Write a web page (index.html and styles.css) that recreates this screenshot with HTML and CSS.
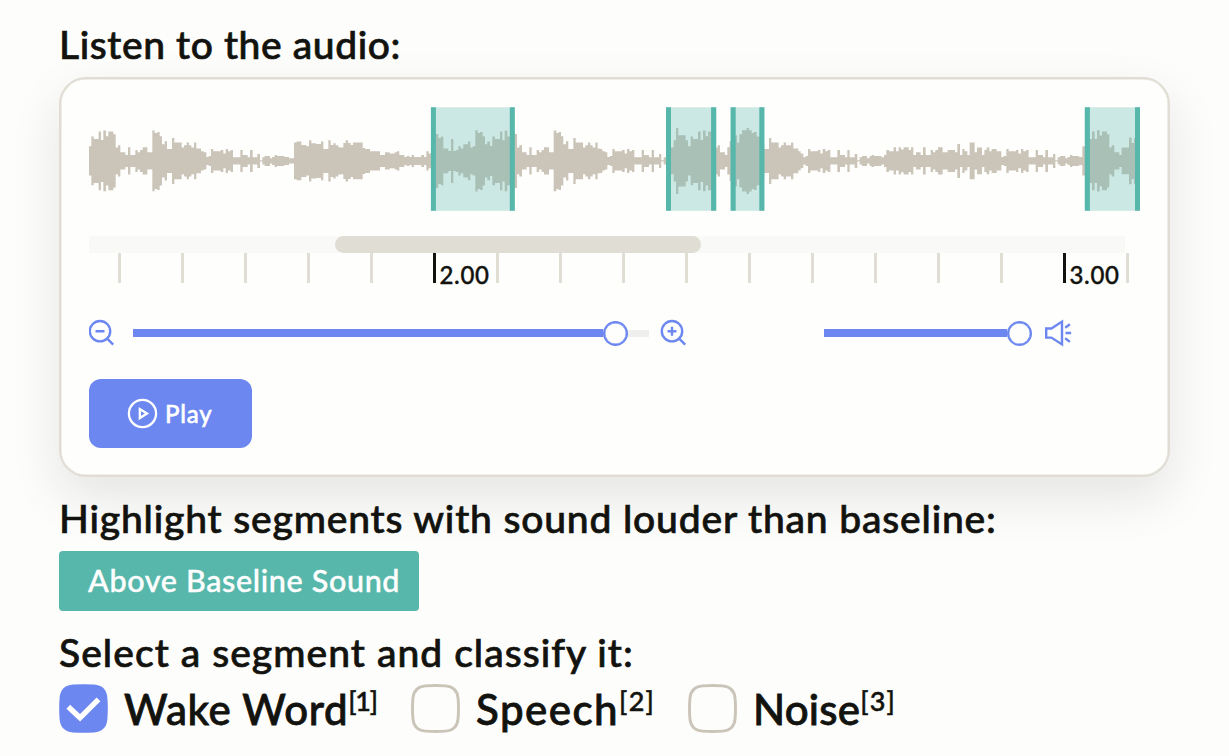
FILE: index.html
```html
<!DOCTYPE html>
<html lang="en">
<head>
<meta charset="utf-8">
<title>Audio segments</title>
<link rel="stylesheet" href="styles.css">
</head>
<body>
<main class="page">
  <h2 class="heading heading-listen">Listen to the audio:</h2>
  <section class="card">
    <svg class="wave" width="1052" height="104" viewBox="89 107 1052 104">
      <defs>
        <g id="half">
          <path transform="translate(240)" d="M27 0V-44H34V-73H41V-66H56V-88H63V-63H70V-91H78V-74H85V-88H100V-80H107V-40H114V-47H121V-26H136V-18H144V-41H151V-18H166V-33H173V-26H180V-33H188V-41H202V-26H217V-91H224V-84H232V-87H239V-74H246V-50H254V-59H261V-36H276V-69H283V-55H305V-40H312V-47H320V-55H327V-47H334V-40H342V-55H349V-37H363V-29H371V-26H379V-12H386V-15H393V-36H400V-29H422V-33H430V-22H437V-36H444V-29H452V-33H459V-11H481V-33H488V-18H503V-11H510V-33H518V-11H532V-21H540V-2H547V-11H554V-15H570V-8H576V-12H584V-18H591V-15H613V-12H627V-8H642V-55H650V-58H664V-48H679V-44H687V-62H694V-53H708V-51H723V-58H730V-36H745V-62H752V-48H760V-53H767V-47H775V-41H781V0Z"/>
          <path transform="translate(1020)" d="M0 0V-40H10V-54H17V-62H24V-54H32V-48H39V-55H68V-39H75V-36H90V-29H120V-18H135V-26H149V-22H164V-26H171V-29H178V-18H193V-12H200V-15H208V-12H215V-18H222V-12H244V-18H252V-12H259V-29H266V-22H273V-50H280V-83H288V-81H295V-69H303V-73H310V-37H325V-30H333V-66H340V-30H347V-33H355V-44H362V-37H370V-50H384V-58H391V-40H398V-44H406V-92H413V-84H420V-87H428V-74H435V-50H442V-58H450V-45H457V-73H465V-66H480V-88H487V-62H494V-91H502V-73H510V-88H524V-81H531V-40H538V-47H546V-26H560V-18H568V-41H575V-18H590V-33H597V-26H605V-33H612V-41H627V-26H641V-91H649V-84H656V-87H663V-74H670V-50H678V-59H685V-36H700V-69H707V-55H729V-40H736V-47H744V-55H751V-47H758V-40H766V-55H773V-37H781V0Z"/>
          <path transform="translate(1800)" d="M0 0V-36H7V-29H15V-26H22V-12H30V-15H37V-36H44V-29H66V-33H74V-22H81V-36H88V-29H96V-33H103V-11H125V-33H132V-18H147V-11H155V-33H162V-11H177V-21H184V-2H191V-11H198V-15H213V-40H221V-62H228V-99H235V-77H257V-62H264V-44H272V-73H279V-66H294V-88H302V-63H309V-91H317V-74H324V-88H339V-80H346V-40H353V-47H360V-26H375V-18H382V-41H389V-60H400V-77H411V-55H418V-80H426V-92H440V-99H447V-92H455V-84H462V-87H470V-73H480V-50H493V-36H507V-69H514V-55H536V-40H543V-47H551V-55H558V-47H573V-55H580V-37H595V-29H602V-22H610V-11H617V-15H624V-36H631V-29H654V-33H661V-22H668V-36H676V-29H683V-33H691V-11H712V-33H720V-18H735V-11H742V-33H749V-11H764V-21H772V-2H779V-11H786V-15H801V-8H808V-12H811V0Z"/>
          <path transform="translate(2610)" d="M0 0V-15H5V-18H12V-15H34V-11H42V-18H49V-33H57V-29H71V-41H78V-29H86V-41H93V-34H101V-41H116V-33H123V-41H130V-18H138V-26H152V-18H159V-41H167V-18H182V-33H189V-26H196V-33H204V-41H218V-26H233V-33H255V-26H262V-51H270V-18H277V-36H284V-29H292V-18H299V-55H314V-26H321V-40H336V-18H343V-33H350V-40H358V-29H365V-36H380V-29H394V-12H401V-15H409V-36H416V-29H438V-33H445V-22H453V-36H460V-29H468V-33H476V-11H497V-33H504V-18H519V-11H526V-33H534V-11H549V-21H556V-2H563V-11H570V-15H586V-8H593V-12H600V-18H607V-15H627V-12H637V-44H645V-70H660V-66H666V-88H674V-66H681V-92H689V-76H696V-88H711V-80H718V-40H725V-47H733V-26H748V-18H755V-40H777V-70H785V-54H792V-69H810V0Z"/>
        </g>
      </defs>
      <g class="wave-shape" transform="translate(0 160.9) scale(.33333)">
        <use href="#half"/>
        <use href="#half" transform="scale(1 -1)"/>
      </g>
      <g class="region">
        <rect x="431" y="107.3" width="83.8" height="103.5"/>
        <rect x="666" y="107.3" width="50.6" height="103.5"/>
        <rect x="730.4" y="107.3" width="34.3" height="103.5"/>
        <rect x="1084.5" y="107.3" width="55.5" height="103.5"/>
      </g>
      <path class="handles" d="M433.4 107.3v103.5M512.3 107.3v103.5M668.5 107.3v103.5M713.6 107.3v103.5M733.2 107.3v103.5M761.8 107.3v103.5M1087.4 107.3v103.5M1137.5 107.3v103.5"/>
    </svg>
    <div class="scroll"><div class="scroll-thumb"></div></div>
    <div class="ruler">
      <i></i><i></i><i></i><i></i><i></i><i class="major">2.00</i><i></i><i></i><i></i><i></i><i></i><i></i><i></i><i></i><i></i><i class="major">3.00</i><i></i>
    </div>
    <div class="controls">
      <svg class="icon" width="28" height="28" viewBox="1 0 28 28"><circle cx="12" cy="12.2" r="10.2"/><path d="M7.5 12.2h9M19.2 19.6l6 6"/></svg>
      <div class="slider zoom"><div class="fill zoom-fill"></div><div class="knob"></div></div>
      <svg class="icon" width="28" height="28" viewBox="-1 0 28 28"><circle cx="12" cy="12.2" r="10.2"/><path d="M7.5 12.2h9M12 7.7v9M19.2 19.6l6 6"/></svg>
      <div class="slider volume"><div class="fill volume-fill"></div><div class="knob"></div></div>
      <svg class="icon speaker" width="28" height="28" viewBox="0 0 28 28"><path d="M2.2 9.5h5.2L18 2.6v22.8L7.4 18.6H2.2ZM21.2 8.8l4.7-3.6M21.5 14h5.6M21.2 19.3l4.7 3.6"/></svg>
    </div>
    <button class="play">
      <svg width="31" height="31" viewBox="0 0 31 31"><circle cx="15.5" cy="15.5" r="13.6"/><path d="M12.8 11.1v9l7.2-4.5Z"/></svg>
      <span>Play</span>
    </button>
  </section>
  <h2 class="heading heading-highlight">Highlight segments with sound louder than baseline:</h2>
  <div class="tag"><span>Above Baseline Sound</span></div>
  <h2 class="heading heading-select">Select a segment and classify it:</h2>
  <div class="choices">
    <label class="choice wake"><svg width="49" height="49" viewBox="0 0 49 49"><path class="on" d="M14 .6Q24.5-.2 35 .6Q47.5 1.5 48.4 14Q49.2 24.5 48.4 35Q47.5 47.5 35 48.4Q24.5 49.2 14 48.4Q1.5 47.5 .6 35Q-.2 24.5 .6 14Q1.5 1.5 14 .6Z"/><path class="check" d="M9.3 22.8 21 33.8 39.5 15.3"/></svg><span class="name">Wake Word</span><span class="key">[1]</span></label>
    <label class="choice speech"><svg width="49" height="49" viewBox="0 0 49 49"><path class="off" d="M14.5 1.9Q24.5 1.1 34.5 1.9Q46.2 2.8 47.1 14.5Q47.9 24.5 47.1 34.5Q46.2 46.2 34.5 47.1Q24.5 47.9 14.5 47.1Q2.8 46.2 1.9 34.5Q1.1 24.5 1.9 14.5Q2.8 2.8 14.5 1.9Z"/></svg><span class="name">Speech</span><span class="key">[2]</span></label>
    <label class="choice noise"><svg width="49" height="49" viewBox="0 0 49 49"><path class="off" d="M14.5 1.9Q24.5 1.1 34.5 1.9Q46.2 2.8 47.1 14.5Q47.9 24.5 47.1 34.5Q46.2 46.2 34.5 47.1Q24.5 47.9 14.5 47.1Q2.8 46.2 1.9 34.5Q1.1 24.5 1.9 14.5Q2.8 2.8 14.5 1.9Z"/></svg><span class="name">Noise</span><span class="key">[3]</span></label>
  </div>
</main>
</body>
</html>
```
FILE: styles.css
```css
* { box-sizing: border-box; }
body {
  margin: 0;
  width: 1229px;
  height: 756px;
  overflow: hidden;
  background: #fdfdfb;
  color: #12120e;
  font-family: Lato, "Open Sans", sans-serif;
  font-weight: 500;
}
.page { padding: 20px 59px 0; }
.heading {
  position: relative;
  z-index: 1;
  margin: 0;
  height: 52px;
  font-size: 39px;
  line-height: 49px;
  font-weight: 500;
  white-space: nowrap;
  -webkit-text-stroke: .7px;
}
.heading-listen { height: 57px; letter-spacing: .6px; }
.heading-highlight { margin-top: 17px; height: 57px; letter-spacing: .83px; }
.heading-select { margin-top: 17px; letter-spacing: 1.05px; }
.card {
  width: 1111px;
  height: 400px;
  padding: 28px 0 0 28px;
  border: 2px solid #e0ddd4;
  border-radius: 27px;
  background: #fefefc;
  box-shadow: inset 0 0 0 .5px #e0ddd4, 0 20px 50px rgba(30, 30, 25, .11);
}
.wave { display: block; }
.wave-shape { fill: #cbc4b9; }
.region { fill: #58b7ab; fill-opacity: .3; }
.handles { stroke: #58b7ab; stroke-width: 5; }
.scroll {
  width: 1036px;
  height: 17px;
  margin-top: 25px;
  padding-left: 246px;
  background: #f9f9f7;
}
.scroll-thumb { width: 366px; height: 17px; border-radius: 8.5px; background: #e0ddd4; }
.ruler { display: flex; height: 30px; padding-left: 28.5px; }
.ruler i {
  flex: 0 0 63px;
  height: 30px;
  padding-left: 7px;
  background: linear-gradient(#e0ddd4, #e0ddd4) left / 3px 30px no-repeat;
  font-size: 24px;
  font-style: normal;
  line-height: 43px;
  letter-spacing: .7px;
}
.ruler .major { background-image: linear-gradient(#12120e, #12120e); -webkit-text-stroke: .4px; }
.ruler i:last-child { flex-basis: 3px; padding: 0; }
.controls { display: flex; align-items: center; height: 28px; margin-top: 36px; }
.icon { flex: none; fill: none; stroke: #6c87f0; stroke-width: 2.4; }
.slider { display: flex; align-items: center; height: 28px; }
.slider.zoom { width: 516px; margin: 0 10px 0 16px; background: linear-gradient(#efefed, #efefed) center / 100% 7px no-repeat; }
.slider.volume { width: 208px; margin: 0 12px 0 137px; }
.fill { height: 7.6px; background: #6c87f0; }
.zoom-fill { width: 470px; }
.volume-fill { width: 183px; }
.knob { width: 25px; height: 25px; border: 2px solid #6c87f0; border-radius: 50%; background: #fefefc; box-shadow: inset 0 0 0 .4px #6c87f0; }
.play {
  display: flex;
  align-items: center;
  width: 163px;
  height: 69px;
  margin-top: 32px;
  padding: 0 0 0 38px;
  gap: 7px;
  border: 0;
  border-radius: 12px;
  background: #6c87f0;
  color: #fff;
  font: 500 24px Lato, sans-serif;
}
.play svg { fill: none; stroke: #fff; stroke-width: 2.3; }
.play span { letter-spacing: .8px; padding-bottom: 1px; -webkit-text-stroke: .5px; }
.tag {
  width: 360px;
  height: 60px;
  padding-left: 29px;
  border-radius: 4px;
  background: #58b7ab;
  color: #fff;
  font-size: 30.5px;
  line-height: 59px;
  letter-spacing: .66px;
  white-space: nowrap;
  -webkit-text-stroke: .4px;
}
.choices { display: flex; margin-top: 4px; height: 49px; }
.choice { display: flex; flex: none; height: 49px; white-space: nowrap; }
.choice svg { flex: none; }
.wake { width: 352px; }
.speech { width: 277px; }
.noise { width: 210px; }
.on { fill: #6c87f0; }
.off { fill: none; stroke: #cbc4b9; stroke-width: 2.9; }
.check { fill: none; stroke: #fff; stroke-width: 5.4; }
.name { margin-left: 16px; font-size: 42px; line-height: 51px; -webkit-text-stroke: .8px; }
.key { font-size: 27px; line-height: 33px; -webkit-text-stroke: .5px; }
.wake .name { letter-spacing: .65px; }
.speech .name { letter-spacing: 1.5px; }
.noise .name { letter-spacing: .2px; }
.wake .key { letter-spacing: -1.2px; }
.speech .key { letter-spacing: 1.2px; }
.noise .key { letter-spacing: 1.2px; }
```
